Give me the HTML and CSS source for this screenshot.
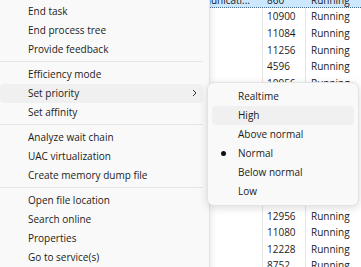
FILE: index.html
```html
<!DOCTYPE html>
<html lang="en">
  <head>
    <meta charset="UTF-8" />
    <title>Task Manager context menu</title>
    <link rel="stylesheet" href="styles.css">
  </head>

  <body>
    <div class="screen">
      <!-- process list behind the menu -->
      <div class="procs">
        <div class="row sel"><span class="name">Communicati...</span><span class="pid">860</span><span class="state">Running</span></div>
        <div class="row"><span class="name"></span><span class="pid">10900</span><span class="state">Running</span></div>
        <div class="row"><span class="name"></span><span class="pid">11084</span><span class="state">Running</span></div>
        <div class="row"><span class="name"></span><span class="pid">11256</span><span class="state">Running</span></div>
        <div class="row"><span class="name"></span><span class="pid">4596</span><span class="state">Running</span></div>
        <div class="row"><span class="name"></span><span class="pid">10956</span><span class="state">Running</span></div>
        <div class="row"><span class="name"></span><span class="pid">7312</span><span class="state">Running</span></div>
        <div class="row"><span class="name"></span><span class="pid">9044</span><span class="state">Running</span></div>
        <div class="row"><span class="name"></span><span class="pid">6128</span><span class="state">Running</span></div>
        <div class="row"><span class="name"></span><span class="pid">3380</span><span class="state">Running</span></div>
        <div class="row"><span class="name"></span><span class="pid">11504</span><span class="state">Running</span></div>
        <div class="row"><span class="name"></span><span class="pid">5224</span><span class="state">Running</span></div>
        <div class="row"><span class="name"></span><span class="pid">12616</span><span class="state">Running</span></div>
        <div class="row"><span class="name"></span><span class="pid">12956</span><span class="state">Running</span></div>
        <div class="row"><span class="name"></span><span class="pid">11080</span><span class="state">Running</span></div>
        <div class="row"><span class="name"></span><span class="pid">12228</span><span class="state">Running</span></div>
        <div class="row"><span class="name"></span><span class="pid">8752</span><span class="state">Running</span></div>
      </div>

      <!-- context menu -->
      <ul class="menu main">
        <li class="item">End task</li>
        <li class="item">End process tree</li>
        <li class="item">Provide feedback</li>
        <li class="sep"></li>
        <li class="item">Efficiency mode</li>
        <li class="item hover">Set priority
          <svg class="chev" width="5" height="8" viewBox="0 0 5 8"><polyline points="1,1 4,4 1,7" fill="none" stroke="#333" stroke-width="1" /></svg>
        </li>
        <li class="item">Set affinity</li>
        <li class="sep"></li>
        <li class="item">Analyze wait chain</li>
        <li class="item">UAC virtualization</li>
        <li class="item">Create memory dump file</li>
        <li class="sep"></li>
        <li class="item">Open file location</li>
        <li class="item">Search online</li>
        <li class="item">Properties</li>
        <li class="item">Go to service(s)</li>
      </ul>

      <!-- priority submenu -->
      <ul class="menu sub">
        <li class="item"><span class="mark"></span>Realtime</li>
        <li class="item hover"><span class="mark"></span>High</li>
        <li class="item"><span class="mark"></span>Above normal</li>
        <li class="item"><span class="mark dot"></span>Normal</li>
        <li class="item"><span class="mark"></span>Below normal</li>
        <li class="item"><span class="mark"></span>Low</li>
      </ul>
    </div>
  </body>
</html>
```

FILE: styles.css
```css
* {
  padding: 0px;
  margin: 0px;
  box-sizing: border-box;
}

html,
body {
  width: 100%;
  height: 100%;
  overflow: hidden;
  background: #fff;
}

body {
  font-family: "Open Sans", "Noto Sans", sans-serif;
  font-size: 10px;
  color: #1b1b1b;
}

.screen {
  position: relative;
  width: 361px;
  height: 267px;
  overflow: hidden;
}

/* process table */
.procs {
  margin-top: -8.2px;
}

.row {
  display: grid;
  grid-template-columns: 262px 43px 1fr;
  height: 16.6px;
  line-height: 16.6px;
  white-space: nowrap;
}

.row .pid,
.row .state {
  border-left: 1px solid #e5e5e5;
}

.row .pid {
  padding-left: 4px;
}

.row .state {
  padding-left: 5px;
}

.row .name {
  text-align: right;
  padding-right: 12px;
}

.row.sel {
  background: #cce8ff;
  border-bottom: 1px dotted #4a6f8f;
}

.row.sel .pid,
.row.sel .state {
  border-left-color: transparent;
}

/* menus */
.menu {
  position: absolute;
  list-style: none;
  background: #f9f9f9;
}

.menu.main {
  left: -4px;
  top: 0;
  width: 214px;
  height: 280px;
  padding-top: 1.5px;
  border-right: 1px solid #e2e2e2;
  box-shadow: 2px 0 6px rgba(0, 0, 0, 0.08);
}

.item {
  display: flex;
  align-items: center;
  height: 19px;
  border-radius: 4px;
  white-space: nowrap;
}

.main .item {
  margin: 0 6px 0 4px;
  padding-left: 28px;
}

.item.hover {
  background: #f0f0f0;
}

.chev {
  margin-left: auto;
  margin-right: 6px;
}

.sep {
  height: 6px;
  margin: 0 6px 0 4px;
  display: flex;
  align-items: center;
}

.sep::after {
  content: "";
  flex: 1;
  height: 1px;
  background: #e5e5e5;
}

.menu.sub {
  left: 207px;
  top: 82px;
  width: 152px;
  padding: 3.5px 0 4px;
  border: 1px solid #e3e3e3;
  border-radius: 7px;
  box-shadow: 0 2px 8px rgba(0, 0, 0, 0.14);
}

.sub .item {
  margin: 0 4px;
  padding-left: 9px;
}

.mark {
  width: 17px;
  display: flex;
  align-items: center;
}

.mark.dot::before {
  content: "";
  width: 5px;
  height: 5px;
  border-radius: 50%;
  background: #111;
}
```
